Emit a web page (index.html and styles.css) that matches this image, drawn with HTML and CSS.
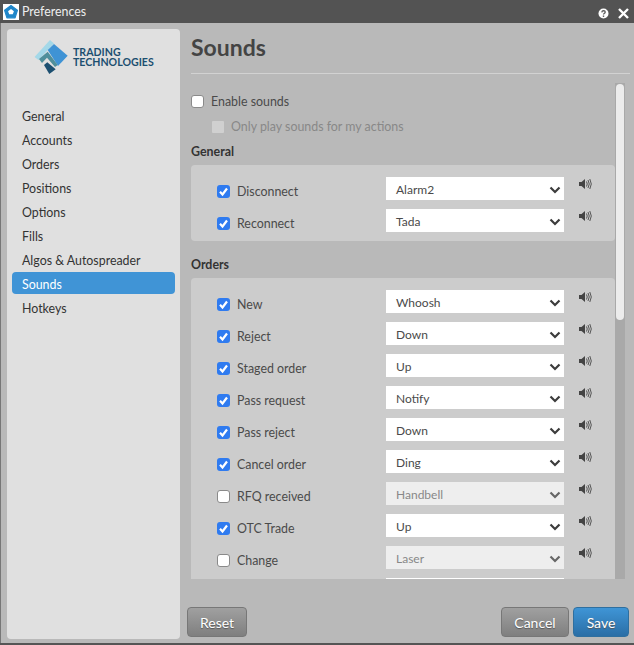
FILE: index.html
```html
<!DOCTYPE html>
<html lang="en">
<head>
  <meta charset="UTF-8">
  <title>Preferences</title>
  <link rel="stylesheet" href="styles.css">
</head>
<body>
  <svg class="defs" width="0" height="0">
    <symbol id="chev" viewBox="0 0 12 8"><path d="M1.5 1.5 6 6l4.500-4.500" fill="none" stroke="currentColor" stroke-width="2.200"/></symbol>
    <symbol id="tick" viewBox="0 0 13 13"><path d="M3 6.800 5.500 9.500 10 3.500" fill="none" stroke="#fff" stroke-width="2.200"/></symbol>
    <symbol id="speaker" viewBox="0 0 13 12">
      <path d="M0 4h2.500L6 1v10L2.500 8H0z" fill="#444"/>
      <path d="M7.500 3.500q1.500 2.500 0 5M9 2q2.500 4 0 8M10.800 1q3 5 0 10" fill="none" stroke="#555" stroke-width="1"/>
    </symbol>
  </svg>

  <div class="window">
    <div class="titlebar">
      <span class="app-icon">
        <svg width="14" height="14" viewBox="0 0 12 12"><path d="M6 .5 11.500 4.500 9.500 11h-7L.5 4.500z" fill="#1f86c9" stroke="#1f86c9" stroke-linejoin="round"/><path d="M6 3.500 8.500 5.300 7.500 8h-3L3.500 5.300z" fill="#fff"/></svg>
      </span>
      <span class="title-text">Preferences</span>
      <span class="title-btns">
        <svg width="11" height="11" viewBox="0 0 11 11"><circle cx="5.500" cy="5.500" r="5" fill="#fff"/><path d="M3.800 4.300q.2-1.600 1.800-1.600 1.600.1 1.600 1.400 0 .9-1 1.400-.7.400-.7 1.100" fill="none" stroke="#555" stroke-width="1.300"/><rect x="4.800" y="7.500" width="1.400" height="1.400" fill="#555"/></svg>
        <svg width="11" height="11" viewBox="0 0 11 11"><path d="M1 1l9 9M10 1l-9 9" stroke="#fff" stroke-width="2.400"/></svg>
      </span>
    </div>

    <div class="content">
      <div class="sidebar">
        <div class="logo">
          <svg width="45" height="42" viewBox="0 0 45 42">
            <path d="M4.500 22 20 5l4 3.500L8.500 25z" fill="#a4d8e8"/>
            <path d="M17.700 15 24 9l13.700 11.700L28 31z" fill="#3f93d5"/>
            <path d="M9 24l8.700-7.300L27.700 30 25 32l-8-9.300L12 28z" fill="#4f8f9b"/>
            <path d="M14 30l3.300-2.700 8.400 7L19.300 39z" fill="#1c4f70"/>
          </svg>
          <div class="logo-text">TRADING<br>TECHNOLOGIES</div>
        </div>
        <div class="nav">
          <div class="nav-item">General</div>
          <div class="nav-item">Accounts</div>
          <div class="nav-item">Orders</div>
          <div class="nav-item">Positions</div>
          <div class="nav-item">Options</div>
          <div class="nav-item">Fills</div>
          <div class="nav-item">Algos &amp; Autospreader</div>
          <div class="nav-item active">Sounds</div>
          <div class="nav-item">Hotkeys</div>
        </div>
      </div>

      <div class="main">
        <h1>Sounds</h1>
        <div class="rule"></div>

        <div class="scroller">
          <div class="scroll-content">
            <div class="option"><span class="check"></span>Enable sounds</div>
            <div class="option sub"><span class="check off"></span>Only play sounds for my actions</div>

            <h2 class="first">General</h2>
            <div class="panel">
              <div class="row">
                <span class="check on"><svg width="13" height="13"><use href="#tick"/></svg></span><span class="name">Disconnect</span>
                <div class="select"><span>Alarm2</span><svg width="12" height="8"><use href="#chev"/></svg></div>
                <svg class="speaker" width="13" height="12"><use href="#speaker"/></svg>
              </div>
              <div class="row">
                <span class="check on"><svg width="13" height="13"><use href="#tick"/></svg></span><span class="name">Reconnect</span>
                <div class="select"><span>Tada</span><svg width="12" height="8"><use href="#chev"/></svg></div>
                <svg class="speaker" width="13" height="12"><use href="#speaker"/></svg>
              </div>
            </div>

            <h2>Orders</h2>
            <div class="panel">
              <div class="row">
                <span class="check on"><svg width="13" height="13"><use href="#tick"/></svg></span><span class="name">New</span>
                <div class="select"><span>Whoosh</span><svg width="12" height="8"><use href="#chev"/></svg></div>
                <svg class="speaker" width="13" height="12"><use href="#speaker"/></svg>
              </div>
              <div class="row">
                <span class="check on"><svg width="13" height="13"><use href="#tick"/></svg></span><span class="name">Reject</span>
                <div class="select"><span>Down</span><svg width="12" height="8"><use href="#chev"/></svg></div>
                <svg class="speaker" width="13" height="12"><use href="#speaker"/></svg>
              </div>
              <div class="row">
                <span class="check on"><svg width="13" height="13"><use href="#tick"/></svg></span><span class="name">Staged order</span>
                <div class="select"><span>Up</span><svg width="12" height="8"><use href="#chev"/></svg></div>
                <svg class="speaker" width="13" height="12"><use href="#speaker"/></svg>
              </div>
              <div class="row">
                <span class="check on"><svg width="13" height="13"><use href="#tick"/></svg></span><span class="name">Pass request</span>
                <div class="select"><span>Notify</span><svg width="12" height="8"><use href="#chev"/></svg></div>
                <svg class="speaker" width="13" height="12"><use href="#speaker"/></svg>
              </div>
              <div class="row">
                <span class="check on"><svg width="13" height="13"><use href="#tick"/></svg></span><span class="name">Pass reject</span>
                <div class="select"><span>Down</span><svg width="12" height="8"><use href="#chev"/></svg></div>
                <svg class="speaker" width="13" height="12"><use href="#speaker"/></svg>
              </div>
              <div class="row">
                <span class="check on"><svg width="13" height="13"><use href="#tick"/></svg></span><span class="name">Cancel order</span>
                <div class="select"><span>Ding</span><svg width="12" height="8"><use href="#chev"/></svg></div>
                <svg class="speaker" width="13" height="12"><use href="#speaker"/></svg>
              </div>
              <div class="row">
                <span class="check"></span><span class="name">RFQ received</span>
                <div class="select disabled"><span>Handbell</span><svg width="12" height="8"><use href="#chev"/></svg></div>
                <svg class="speaker" width="13" height="12"><use href="#speaker"/></svg>
              </div>
              <div class="row">
                <span class="check on"><svg width="13" height="13"><use href="#tick"/></svg></span><span class="name">OTC Trade</span>
                <div class="select"><span>Up</span><svg width="12" height="8"><use href="#chev"/></svg></div>
                <svg class="speaker" width="13" height="12"><use href="#speaker"/></svg>
              </div>
              <div class="row">
                <span class="check"></span><span class="name">Change</span>
                <div class="select disabled"><span>Laser</span><svg width="12" height="8"><use href="#chev"/></svg></div>
                <svg class="speaker" width="13" height="12"><use href="#speaker"/></svg>
              </div>
              <div class="row">
                <span class="check"></span><span class="name"></span>
                <div class="select"></div>
              </div>
            </div>
          </div>
          <div class="track"><div class="thumb"></div></div>
        </div>

        <div class="footer">
          <button class="btn">Reset</button>
          <span class="spacer"></span>
          <button class="btn">Cancel</button>
          <button class="btn save">Save</button>
        </div>
      </div>
    </div>
  </div>
</body>
</html>
```

FILE: styles.css
```css
* {
  box-sizing: border-box;
}
body {
  margin: 0;
  font-family: Lato, "Open Sans", sans-serif;
  font-size: 12.4px;
  color: #4a4a4a;
}
.defs {
  position: absolute;
}
.window {
  width: 634px;
  height: 645px;
  display: flex;
  flex-direction: column;
  overflow: hidden;
  background: #b9b9b9;
  box-shadow: inset 1px 0 #777;
  border-bottom: 2px solid #555;
}
.titlebar {
  height: 23px;
  flex: none;
  display: flex;
  align-items: center;
  padding-left: 3px;
  background: #535353;
  color: #eee;
}
.app-icon {
  width: 16px;
  height: 16px;
  display: flex;
  align-items: center;
  justify-content: center;
  background: #fff;
  margin-top: 1px;
}
.title-text {
  margin-left: 3px;
}
.title-btns {
  margin-left: auto;
  display: flex;
  align-items: center;
  gap: 9px;
  padding-right: 5px;
  padding-top: 3px;
}
.content {
  flex: 1;
  display: flex;
  min-height: 0;
}

/* left menu */
.sidebar {
  width: 173px;
  height: 610px;
  margin: 6px 0 0 7px;
  flex: none;
  background: #e0e0e0;
  border-radius: 4px;
  padding: 0 5px;
}
.logo {
  height: 75px;
  display: flex;
  padding: 6px 0 0 18px;
}
.logo-text {
  margin: 12px 0 0 -2px;
  font-size: 10.6px;
  font-weight: 700;
  line-height: 10px;
  color: #1c4f70;
}
.nav-item {
  height: 22px;
  line-height: 26px;
  margin-bottom: 2px;
  padding-left: 10px;
  border-radius: 4px;
  color: #333;
}
.nav-item.active {
  background: #4094d6;
  color: #fff;
}

/* right side */
.main {
  flex: 1;
  min-width: 0;
  padding-left: 7px;
}
h1 {
  margin: 0;
  height: 50px;
  padding-left: 4px;
  font-size: 23px;
  font-weight: 700;
  line-height: 48px;
  color: #444;
}
.rule {
  height: 1px;
  width: 439px;
  margin-left: 4px;
  background: #d2d2d2;
}
.scroller {
  height: 496px;
  margin-top: 9px;
  display: flex;
  overflow: hidden;
}
.scroll-content {
  width: 424px;
  margin-left: 4px;
  flex: none;
}
.track {
  width: 10px;
  height: 100%;
  padding: 1px;
  flex: none;
  background: #a9a9a9;
}
.thumb {
  height: 236px;
  border-radius: 4px;
  background: #ececec;
}
.option {
  height: 30px;
  padding-top: 6px;
  display: flex;
  align-items: center;
}
.option .check {
  margin: 0 7px 0 0;
}
.option.sub {
  height: 25px;
  padding: 2px 0 0 21px;
  color: #888;
}
h2 {
  margin: 0;
  height: 37px;
  padding-top: 15px;
  font-size: 12.4px;
  font-weight: 700;
  line-height: 18px;
  color: #333;
}
h2.first {
  height: 27px;
  padding-top: 5px;
}
.panel {
  display: flex;
  flex-direction: column;
  gap: 9px;
  padding: 12px 0 9px;
  background: #cccccc;
  border-radius: 4px;
}
.row {
  height: 23px;
  flex: none;
  display: flex;
  align-items: flex-start;
  padding-left: 26px;
}
.name {
  width: 149px;
  margin-left: 7px;
  padding-top: 6px;
  line-height: 18px;
}
.check {
  width: 13px;
  height: 13px;
  flex: none;
  margin-top: 8px;
  background: #fff;
  border: 1px solid #8a8a8a;
  border-radius: 3px;
}
.check svg {
  display: block;
}
.check.on {
  background: #2f7bf0;
  border: 0;
}
.option .check.off {
  width: 12px;
  height: 12px;
  background: #d0d0d0;
  border: 0;
  border-radius: 1px;
}
.select {
  width: 178px;
  height: 23px;
  display: flex;
  align-items: center;
  justify-content: space-between;
  padding: 2px 3px 0 10px;
  font-size: 12px;
  background: #fff;
  color: #4a4a4a;
}
.select svg {
  color: #3c3c3c;
}
.select.disabled {
  background: #eeeeee;
  color: #888;
}
.select.disabled svg {
  color: #666;
}
.speaker {
  margin: 1px 0 0 15px;
}

/* buttons */
.footer {
  height: 30px;
  margin-top: 28px;
  display: flex;
  gap: 4px;
  padding-right: 5px;
}
.spacer {
  flex: 1;
}
.btn {
  height: 30px;
  padding: 0;
  width: 60px;
  font-family: inherit;
  font-size: 14px;
  color: #fff;
  text-shadow: 0 1px 1px #555;
  border: 1px solid #777;
  border-radius: 4px;
  background: linear-gradient(#a0a0a0, #7f7f7f);
}
.btn:nth-of-type(2) {
  width: 68px;
}
.btn.save {
  width: 56px;
  border-color: #2f6f9f;
  background: linear-gradient(#3f95d6, #2a6ea6);
}
```
